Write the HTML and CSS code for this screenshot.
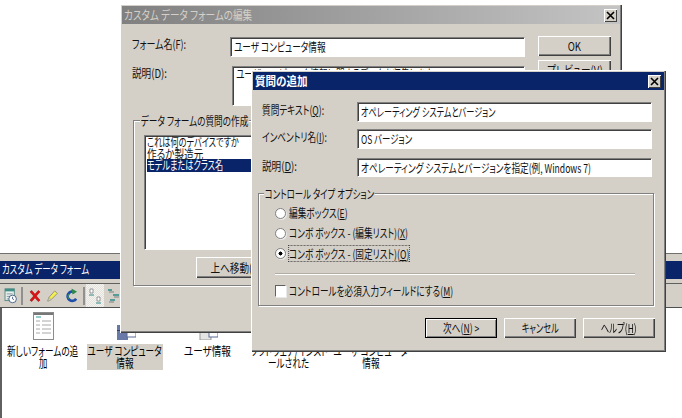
FILE: index.html
```html
<!DOCTYPE html>
<html lang="ja">
<head>
<meta charset="utf-8">
<title>質問の追加</title>
<link rel="stylesheet" href="styles.css">
</head>
<body>
<div class="desktop">
  <section class="console">
    <div class="titlebar console-title"><span class="t s70">カスタム データ フォーム</span></div>
    <div class="toolbar">
      <svg class="tool tool-cal" width="13" height="16" viewBox="0 0 15 19"><rect x="1" y="1" width="11" height="14" fill="#e8f0ee" stroke="#4a7f7a"/><rect x="1" y="1" width="11" height="3" fill="#3f8f88"/><path d="M3 7h7M3 10h4M3 13h3" stroke="#7a8a90"/><circle cx="10" cy="13" r="4.5" fill="#fff" stroke="#30507a"/><path d="M10 10.5V13l1.5 1" stroke="#30507a" fill="none"/></svg>
      <span class="tool-sep"></span>
      <svg class="tool" width="12" height="14" viewBox="0 0 13 14"><path d="M1 2.5 3 1l3.500 4L10 1l2 1.500L8 7l4 4.500L10 13 6.500 9 3 13l-2-1.500L5 7z" fill="#e01010" stroke="#8a0808" stroke-width=".5"/></svg>
      <svg class="tool tool-pencil" width="12" height="14" viewBox="0 0 14 14"><path d="M1 13l1-4 7-8 3 3-7 7z" fill="#f4ee50" stroke="#8a8a78"/><path d="M1 13l1-4 3 2z" fill="#d8d8c8" stroke="#8a8a78" stroke-width=".5"/></svg>
      <svg class="tool tool-refresh" width="12" height="16" viewBox="0 0 13 16"><path d="M9.500 4A5 5 0 1 0 11 11" fill="none" stroke="#1f4fa8" stroke-width="3"/><path d="M6 0l6 3.500-5 3z" fill="#2e8a4a"/><path d="M3 6a4 4 0 0 0 0 5" fill="none" stroke="#4a9a50" stroke-width="1"/></svg>
      <span class="tool-sep tool-sep-b"></span>
      <span class="tool-btn">
        <svg width="14" height="16" viewBox="0 0 14 16"><path d="M2 1h3v4H2z" fill="#fff" stroke="#808080" stroke-width=".8"/><path d="M1 7h5" stroke="#2e8a88"/><path d="M9 9h3v4H9z" fill="#fff" stroke="#808080" stroke-width=".8"/><path d="M8 15h5" stroke="#2e8a88"/></svg>
      </span>
      <svg class="tool-list" width="12" height="16" viewBox="0 0 12 16"><path d="M0 2h4M5 7h6M2 12h5" stroke="#2e8a88" stroke-width="1.500"/><path d="M1 4h5M6 9h5M1 14h5" stroke="#808080"/></svg>
    </div>
    <div class="client">
      <div class="item">
        <svg class="item-icon" width="21" height="28" viewBox="0 0 21 28"><rect x=".5" y=".5" width="20" height="27" fill="#fff" stroke="#8c8c8c"/><rect x="1" y="1" width="19" height="2" fill="#777"/><path d="M3 5h5" stroke="#2e9a98"/><path d="M3 9h4M9 9h9M3 13h4M9 13h9M3 17h4M9 17h9M3 21h4M9 21h9" stroke="#a8a8a8"/></svg>
        <div class="item-label"><span class="t tc">新しいフォームの追</span><span class="t tc">加</span></div>
      </div>
      <div class="item">
        <svg class="item-icon" width="21" height="28" viewBox="0 0 21 28"><rect x="2" y="13" width="11" height="15" fill="#6a7aa8"/><rect x="4" y="13" width="7" height="5" fill="#1f9a9a"/><rect x="2" y="18" width="11" height="1" fill="#34406a"/><rect x="12" y="20" width="9" height="5" fill="#fff" stroke="#5a6a98"/></svg>
        <div class="item-label item-selected"><span class="t tc">ユーザ コンピュータ</span><span class="t tc">情報</span></div>
      </div>
      <div class="item">
        <svg class="item-icon" width="21" height="28" viewBox="0 0 21 28"><rect x="3" y="18" width="11" height="10" fill="#e4e4e4" stroke="#9a9a9a"/><rect x="12" y="20" width="9" height="5" fill="#fff" stroke="#5a6a98"/></svg>
        <div class="item-label"><span class="t tc s80">ユーザ情報</span></div>
      </div>
      <div class="item">
        <span class="item-icon"></span>
        <div class="item-label"><span class="t tc">ソフトウェア/インスト</span><span class="t tc">ールされた</span></div>
      </div>
      <div class="item">
        <span class="item-icon"></span>
        <div class="item-label"><span class="t tc">ユーザ コンピュータ</span><span class="t tc">情報</span></div>
      </div>
    </div>
  </section>

  <section class="dialog dialog-edit">
    <div class="titlebar titlebar-inactive">
      <span class="t s80">カスタム データ フォームの編集</span>
      <span class="close"><svg width="9" height="9" viewBox="0 0 9 9"><path d="M1 1l7 7M8 1L1 8" stroke="#000" stroke-width="1.600"/></svg></span>
    </div>
    <div class="edit-body">
      <div class="edit-form">
        <label class="edit-label t s75">フォーム名(F):</label>
        <div class="field edit-name"><span class="t">ユーザ コンピュータ情報</span></div>
        <div class="edit-actions">
          <button class="btn btn-side"><span class="t tc s80">OK</span></button>
          <button class="btn btn-side"><span class="t tc s80">プレビュー(V)</span></button>
        </div>
        <label class="edit-label t s80">説明(D):</label>
        <div class="field edit-desc"><span class="t">ユーザ コンピュータ情報に関するデータを収集します</span></div>
      </div>
      <div class="group edit-group">
        <span class="legend t">データ フォームの質問の作成</span>
        <ul class="listbox">
          <li><span class="t s68">これは何のデバイスですか</span></li>
          <li><span class="t s80">作るか製造元</span></li>
          <li class="list-selected"><span class="t s68">モデルまたはクラス名</span></li>
        </ul>
        <button class="btn btn-move"><span class="t tc s80">上へ移動(U)</span></button>
      </div>
    </div>
  </section>

  <section class="dialog dialog-add">
    <div class="titlebar">
      <span class="t title-bold">質問の追加</span>
      <span class="close"><svg width="9" height="9" viewBox="0 0 9 9"><path d="M1 1l7 7M8 1L1 8" stroke="#000" stroke-width="1.600"/></svg></span>
    </div>
    <div class="add-body">
      <div class="add-form">
        <label class="t">質問テキスト(<u>Q</u>):</label>
        <div class="field"><span class="t s68">オペレーティング システムとバージョン</span></div>
        <label class="t">インベントリ名(<u>I</u>):</label>
        <div class="field"><span class="t s70">OS バージョン</span></div>
        <label class="t s80">説明(<u>D</u>):</label>
        <div class="field field-short"><span class="t">オペレーティング システムとバージョンを指定(例, Windows 7)</span></div>
      </div>
      <div class="group add-group">
        <span class="legend t s70">コントロール タイプ オプション</span>
        <div class="option"><span class="radio"></span><span class="t">編集ボックス(<u>E</u>)</span></div>
        <div class="option"><span class="radio"></span><span class="t">コンボ ボックス - (編集リスト)(<u>X</u>)</span></div>
        <div class="option"><span class="radio radio-on"></span><span class="t focused">コンボ ボックス - (固定リスト)(<u>O</u>)</span></div>
        <div class="rule"></div>
        <div class="option"><span class="check"></span><span class="t">コントロールを必須入力フィールドにする(<u>M</u>)</span></div>
      </div>
      <div class="add-actions">
        <button class="btn btn-wide btn-default"><span class="t tc">次へ(<u>N</u>) &gt;</span></button>
        <button class="btn btn-wide"><span class="t tc s68">キャンセル</span></button>
        <button class="btn btn-wide"><span class="t tc s70">ヘルプ(<u>H</u>)</span></button>
      </div>
    </div>
  </section>
</div>
</body>
</html>
```
FILE: styles.css
```css
* { box-sizing: border-box; }
html, body { margin: 0; padding: 0; background: #fff; }
body { overflow: hidden; }
.desktop {
  position: relative;
  width: 682px;
  height: 418px;
  overflow: hidden;
  font: 12px/14px "Noto Sans CJK JP", sans-serif;
  font-feature-settings: "palt";
  color: #111;
  filter: blur(.3px);
}
/* the reference face is a narrow bitmap Gothic: squeeze real text to match */
.t {
  display: inline-block;
  white-space: nowrap;
  transform: scaleX(.72);
  transform-origin: 0 50%;
}
.tc { transform-origin: 50% 50%; }
.s68 { transform: scaleX(.68); }
.s70 { transform: scaleX(.7); }
.s75 { transform: scaleX(.75); }
.s80 { transform: scaleX(.8); }
u { text-underline-offset: 1px; }

/* back console window */
.console {
  position: absolute;
  left: 0;
  top: 253px;
  width: 682px;
  height: 165px;
  display: flex;
  flex-direction: column;
  background: #d4d0c8;
  border-top: 1px solid #707070;
}
.titlebar {
  display: flex;
  align-items: center;
  justify-content: space-between;
  height: 18px;
  padding: 0 3px 0 2px;
  background: #0a246a;
  color: #fff;
}
.console-title { margin-top: 7px; padding-bottom: 2px; }
.toolbar {
  display: flex;
  align-items: center;
  height: 25px;
  margin-top: 4px;
  border-top: 1px solid #606060;
  border-bottom: 1px solid #505050;
  padding-left: 4px;
}
.tool { margin-right: 6px; flex: none; }
.tool-cal { margin-right: 4px; }
.tool-pencil { margin-right: 7px; }
.tool-refresh { margin-right: 5px; }
.tool-sep {
  width: 2px;
  height: 18px;
  background: #909090;
  margin: 0 6px 0 0;
  flex: none;
}
.tool-sep-b { margin: 0 1px 0 0; }
.tool-btn {
  display: flex;
  align-items: center;
  justify-content: center;
  width: 18px;
  height: 23px;
  background: repeating-conic-gradient(#e4e2dc 0 25%, #f4f3f0 0 50%) 0 0 / 2px 2px;
  flex: none;
}
.tool-list { margin-left: 4px; }
.client {
  flex: 1;
  display: flex;
  background: #fff;
  padding: 4px 0 0 2px;
  border-left: 2px solid #606060;
  line-height: 12px;
}
.item {
  display: flex;
  flex-direction: column;
  align-items: center;
  width: 82px;
  flex: none;
}
.client .item:first-child { margin-left: -2px; }
.item-icon { display: block; width: 21px; height: 28px; flex: none; }
.item-label {
  display: flex;
  flex-direction: column;
  align-items: center;
  margin-top: 4px;
  width: 76px;
  min-height: 26px;
  padding-top: 1px;
  color: #000;
}
.item-selected { background: #d4d0c8; }

/* dialogs */
.dialog {
  position: absolute;
  display: flex;
  flex-direction: column;
  background: #d4d0c8;
  padding: 2px;
  box-shadow: inset 1px 1px #fff, inset -1px -1px #404040, inset -2px -2px #808080;
}
.dialog-edit { left: 120px; top: 4px; width: 502px; height: 329px; }
.dialog-add { left: 251px; top: 70px; width: 415px; height: 282px; }
.titlebar-inactive {
  background: linear-gradient(90deg, #808080, #c4c4c4);
  color: #d4d0c8;
}
.title-bold { font-weight: 700; transform: scaleX(.88); }
.close {
  display: flex;
  align-items: center;
  justify-content: center;
  width: 13px;
  height: 13px;
  background: #d4d0c8;
  box-shadow: inset 1px 1px #fff, inset -1px -1px #404040;
}

.field {
  height: 20px;
  padding: 2px 3px;
  background: #fff;
  white-space: nowrap;
  overflow: hidden;
  border: 1px solid;
  border-color: #808080 #fff #fff #808080;
  box-shadow: inset 1px 1px #404040;
}
.btn {
  display: flex;
  align-items: center;
  justify-content: center;
  margin: 0;
  padding: 0;
  background: #d4d0c8;
  border: 0;
  font: inherit;
  font-feature-settings: inherit;
  color: #111;
  box-shadow: inset 1px 1px #fff, inset -1px -1px #404040, inset -2px -2px #808080;
}

/* edit dialog */
.edit-body { padding: 13px 0 0 10px; }
.edit-form {
  display: grid;
  grid-template-columns: 85px 295px 73px;
  grid-template-rows: 20px 40px;
  column-gap: 13px;
  row-gap: 9px;
}
.edit-name { grid-column: 2; }
.edit-desc {
  grid-column: 2;
  height: 40px;
  margin-left: 2px;
  padding-top: 0;
}
.edit-actions {
  grid-column: 3;
  grid-row: 1 / 3;
  display: flex;
  flex-direction: column;
  gap: 4px;
  margin-top: -1px;
}
.btn-side { width: 73px; height: 20px; }
.group {
  display: flex;
  flex-direction: column;
  border: 1px solid #808080;
  box-shadow: 1px 1px #fff, inset 1px 1px #fff;
}
.legend {
  align-self: flex-start;
  height: 14px;
  margin-top: -7px;
  padding: 0 1px;
  background: #d4d0c8;
}
.edit-group {
  width: 478px;
  height: 166px;
  margin-top: 14px;
  margin-left: 1px;
  padding: 0 0 0 10px;
}
.edit-group .legend { margin-left: -4px; }
.listbox {
  list-style: none;
  width: 300px;
  height: 115px;
  margin: 7px 0 0;
  padding: 0 2px;
  background: #fff;
  border: 1px solid;
  border-color: #808080 #fff #fff #808080;
  box-shadow: inset 1px 1px #404040;
  line-height: 11.500px;
}
.listbox .t { display: block; }
.list-selected { background: #0a246a; color: #fff; padding-bottom: 1px; }
.btn-move { width: 80px; height: 21px; margin: 7px 0 0 52px; }

/* add dialog */
.add-body { padding: 12px 0 0 5px; }
.add-form {
  display: grid;
  grid-template-columns: 95px 295px;
  grid-template-rows: 27px 29px 20px;
  padding-left: 4px;
}
.add-form label { padding-top: 1px; }
.add-form .field-short { height: 19px; }
.add-group {
  width: 396px;
  height: 113px;
  margin-top: 15px;
  padding: 0 0 0 16px;
}
.add-group .legend { margin-left: -11px; }
.option {
  display: flex;
  align-items: center;
  height: 20px;
  gap: 3px;
}
.add-group .legend + .option { margin-top: 2px; }
.radio {
  width: 11px;
  height: 11px;
  border-radius: 50%;
  background: #fff;
  border: 1px solid #808080;
  box-shadow: 1px 1px #e8e8e8;
  flex: none;
}
.radio-on { background: radial-gradient(circle, #000 0 1.800px, #fff 2.200px); }
.focused { outline: 1px dotted #333; outline-offset: 0; line-height: 15px; }
.rule {
  width: 360px;
  height: 2px;
  margin: 10px 0 6px;
  background: #b0aca4;
  border-bottom: 1px solid #fff;
}
.check {
  width: 11px;
  height: 12px;
  background: #fff;
  border: 1px solid;
  border-color: #606060 #fff #fff #606060;
  box-shadow: 1px 1px #e8e8e8;
  flex: none;
}
.add-actions {
  display: flex;
  gap: 7px;
  margin: 12px 0 0 167px;
}
.btn-wide { width: 72px; height: 20px; }
.btn-default {
  box-shadow: inset 0 0 0 1px #000, inset 2px 2px #fff, inset -2px -2px #808080;
}
```
